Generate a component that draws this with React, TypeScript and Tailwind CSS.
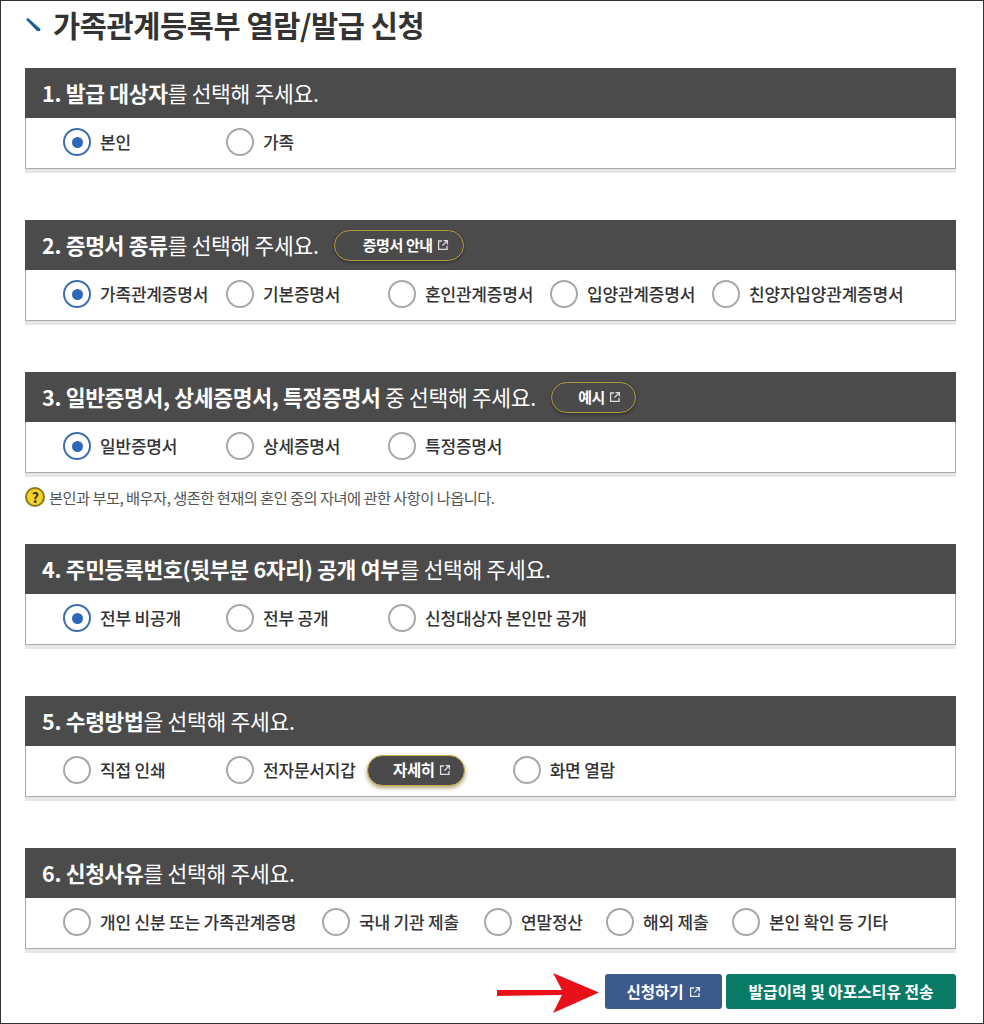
const FONT = "font-['Noto_Sans_CJK_KR','Noto_Sans',sans-serif]";

function LinkIcon({ className }: { className?: string }) {
  return (
    <svg viewBox="0 0 12 12" fill="none" stroke="currentColor" strokeWidth="1.3" className={className}>
      <path d="M5 2H1.6v8.4H10V7" />
      <path d="M6.5 1.6h3.9v3.9M10.2 1.8 5.4 6.6" />
    </svg>
  );
}

function Radio({ label, checked, width }: { label: string; checked?: boolean; width: string }) {
  return (
    <label className={`flex items-center gap-[9px] ${width}`}>
      <span
        className={`flex h-[28px] w-[28px] shrink-0 items-center justify-center rounded-full border-2 bg-white ${
          checked ? "border-[#3f6fae]" : "border-[#a8a8a8]"
        }`}
      >
        {checked && <span className="h-[11px] w-[11px] rounded-full bg-[#2f68b8]" />}
      </span>
      <span className="whitespace-nowrap text-[17px] font-medium tracking-[-0.2px] text-[#333]">{label}</span>
    </label>
  );
}

function GuideButton({ label, width }: { label: string; width: string }) {
  return (
    <button
      className={`ml-[15px] flex h-[31px] items-center justify-end gap-[4px] rounded-full border border-[#b39a3a] bg-[#4a4a4a] pr-[14px] text-[15px] font-bold tracking-[-0.4px] text-white shadow-[0_1px_3px_rgba(0,0,0,0.4)] ${width}`}
    >
      {label}
      <LinkIcon className="h-[12px] w-[12px] text-[#ddd]" />
    </button>
  );
}

function Section({
  title,
  rest,
  extra,
  children,
}: {
  title: string;
  rest: string;
  extra?: React.ReactNode;
  children: React.ReactNode;
}) {
  return (
    <section className="border-b-[4px] border-[#e6e6e6]">
      <div className="border border-[#aaa]">
        <div className="-mx-px -mt-px flex h-[50px] items-center bg-[#4b4b4b] pl-[17px] text-[21.5px] tracking-[-0.3px] text-white">
          <span className="font-bold">{title}</span>
          <span className="whitespace-pre font-normal">{rest}</span>
          {extra}
        </div>
        <div className="flex h-[50px] items-center bg-white pb-[2px] pl-[37px]">{children}</div>
      </div>
    </section>
  );
}

export default function App() {
  return (
    <div className={`${FONT} flex h-[1024px] w-[984px] flex-col border border-[#333] bg-white pl-[24px] pr-[27px]`}>
      <div className="flex h-[47px] items-center gap-[12px]">
        <svg viewBox="0 0 16 14" className="h-[14px] w-[16px]">
          <path d="M1 1.5 3 0 15.5 11 15 13 12 13Z" fill="#1f5f94" />
        </svg>
        <h1 className="text-[29.5px] font-bold tracking-[-0.4px] text-[#333]">가족관계등록부 열람/발급 신청</h1>
      </div>
      <div className="mt-[20px] flex flex-col">
        <Section title="1. 발급 대상자" rest="를 선택해 주세요.">
          <Radio label="본인" checked width="w-[163px]" />
          <Radio label="가족" width="w-[162px]" />
        </Section>
        <div className="mt-[47px]">
          <Section
            title="2. 증명서 종류"
            rest="를 선택해 주세요."
            extra={<GuideButton label="증명서 안내" width="w-[130px]" />}
          >
            <Radio label="가족관계증명서" checked width="w-[163px]" />
            <Radio label="기본증명서" width="w-[162px]" />
            <Radio label="혼인관계증명서" width="w-[162px]" />
            <Radio label="입양관계증명서" width="w-[162px]" />
            <Radio label="친양자입양관계증명서" width="w-[190px]" />
          </Section>
        </div>
        <div className="mt-[47px]">
          <Section
            title="3. 일반증명서, 상세증명서, 특정증명서"
            rest=" 중 선택해 주세요."
            extra={<GuideButton label="예시" width="w-[85px]" />}
          >
            <Radio label="일반증명서" checked width="w-[163px]" />
            <Radio label="상세증명서" width="w-[162px]" />
            <Radio label="특정증명서" width="w-[162px]" />
          </Section>
        </div>
        <p className="mt-[8px] flex h-[24px] items-center gap-[4px] text-[15.3px] tracking-[-0.55px] text-[#555]">
          <span className="flex h-[20px] w-[20px] items-center justify-center rounded-full border-2 border-[#8a7a1a] bg-[#f7d026] text-[14px] font-bold text-[#333]">
            ?
          </span>
          본인과 부모, 배우자, 생존한 현재의 혼인 중의 자녀에 관한 사항이 나옵니다.
        </p>
        <div className="mt-[35px]">
          <Section title="4. 주민등록번호(뒷부분 6자리) 공개 여부" rest="를 선택해 주세요.">
            <Radio label="전부 비공개" checked width="w-[163px]" />
            <Radio label="전부 공개" width="w-[162px]" />
            <Radio label="신청대상자 본인만 공개" width="w-[220px]" />
          </Section>
        </div>
        <div className="mt-[47px]">
          <Section title="5. 수령방법" rest="을 선택해 주세요.">
            <Radio label="직접 인쇄" width="w-[163px]" />
            <Radio label="전자문서지갑" width="w-auto" />
            <button className="ml-[11px] mr-[48px] flex h-[31px] w-[98px] items-center justify-end gap-[4px] rounded-full border border-[#c9b04a] bg-[#4a4a4a] pr-[13px] text-[15.5px] font-bold tracking-[-0.4px] text-white shadow-[0_2px_4px_rgba(120,100,20,0.6)]">
              자세히
              <LinkIcon className="h-[12px] w-[12px] text-[#ddd]" />
            </button>
            <Radio label="화면 열람" width="w-[150px]" />
          </Section>
        </div>
        <div className="mt-[47px]">
          <Section title="6. 신청사유" rest="를 선택해 주세요.">
            <Radio label="개인 신분 또는 가족관계증명" width="w-[259px]" />
            <Radio label="국내 기관 제출" width="w-[162px]" />
            <Radio label="연말정산" width="w-[122px]" />
            <Radio label="해외 제출" width="w-[126px]" />
            <Radio label="본인 확인 등 기타" width="w-[170px]" />
          </Section>
        </div>
      </div>
      <div className="mt-[16px] flex items-center justify-end gap-[4px]">
        <svg viewBox="0 0 104 42" className="mt-[3px] h-[42px] w-[104px]">
          <path d="M0 18 65 18 56 1 102 20.5 56 41 65 23 0 24Z" fill="#e8111a" />
        </svg>
        <button className="flex h-[35px] w-[117px] items-center justify-center gap-[5px] rounded-[3px] bg-[#3d5a8c] text-[15.5px] font-bold text-white">
          신청하기
          <LinkIcon className="h-[12px] w-[12px] text-[#eee]" />
        </button>
        <button className="h-[35px] w-[230px] rounded-[3px] bg-[#087a66] text-[15.8px] font-bold text-white">
          발급이력 및 아포스티유 전송
        </button>
      </div>
    </div>
  );
}
